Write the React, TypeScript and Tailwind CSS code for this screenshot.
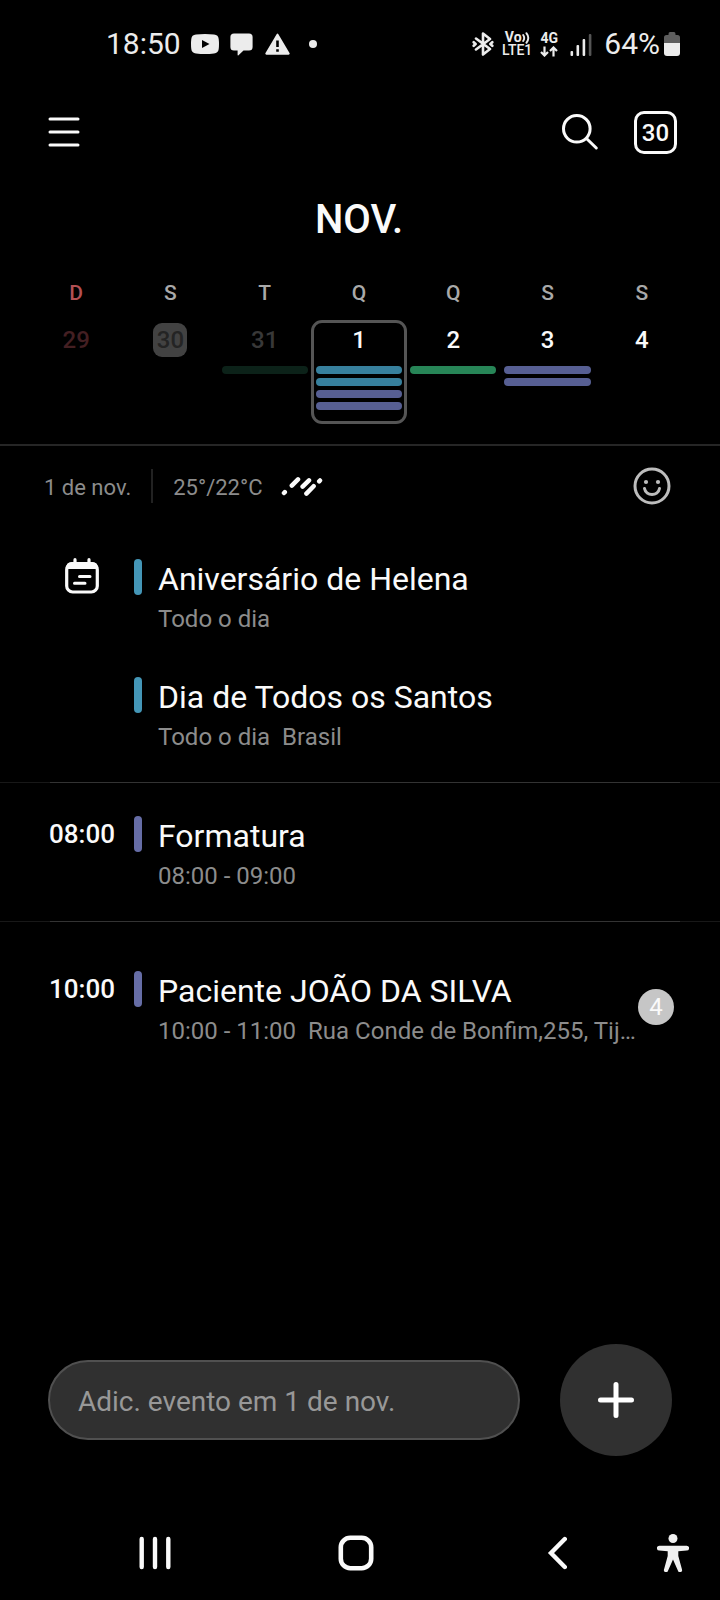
import { useState } from "react";

const TEAL = "bg-[#37809d]";
const INDIGO = "bg-[#575f93]";
const GREEN = "bg-[#278557]";

type Day = {
  weekday: string;
  label: string;
  tone: string;
  weekdayTone: string;
  bars: string[];
};

const week: Day[] = [
  { weekday: "D", label: "29", tone: "text-[#441f22]", weekdayTone: "text-[#b35053]", bars: [] },
  { weekday: "S", label: "30", tone: "text-[#242424] bg-[#424242]", weekdayTone: "text-[#a9a9a9]", bars: [] },
  { weekday: "T", label: "31", tone: "text-[#383838]", weekdayTone: "text-[#a9a9a9]", bars: ["bg-[#0c2219]"] },
  { weekday: "Q", label: "1", tone: "text-[#fafafa]", weekdayTone: "text-[#a9a9a9]", bars: [TEAL, TEAL, INDIGO, INDIGO] },
  { weekday: "Q", label: "2", tone: "text-[#fafafa]", weekdayTone: "text-[#a9a9a9]", bars: [GREEN] },
  { weekday: "S", label: "3", tone: "text-[#fafafa]", weekdayTone: "text-[#a9a9a9]", bars: [INDIGO, INDIGO] },
  { weekday: "S", label: "4", tone: "text-[#fafafa]", weekdayTone: "text-[#a9a9a9]", bars: [] },
];

function StatusBar() {
  return (
    <div className="flex h-[88px] items-center justify-between pr-10 pl-[106px] text-[30px] leading-9 text-[#ececec]">
      <div className="flex items-center">
        <span>18:50</span>
        <svg className="ml-[10px]" width="28" height="20" viewBox="0 0 28 20" aria-hidden="true">
          <path fill="currentColor" fillRule="evenodd" d="M5 .6Q14-.4 23 .6Q27.400 1 27.700 5Q28.300 10 27.700 15Q27.400 19 23 19.400Q14 20.400 5 19.400Q.6 19 .3 15Q-.3 10 .3 5Q.6 1 5 .6ZM11 6V14L18.500 10Z" />
        </svg>
        <svg className="ml-[11px]" width="23" height="23" viewBox="0 0 23 23" aria-hidden="true">
          <path fill="currentColor" d="M4 .5H19Q22.600.5 22.600 4V14Q22.600 17.500 19 17.500H13.500L8.500 22.300Q7.600 22.800 7.600 21.800V17.500H4Q.4 17.500.4 14V4Q.4.5 4 .5Z" />
        </svg>
        <svg className="ml-3" width="25" height="22" viewBox="0 0 25 22" aria-hidden="true">
          <path fill="currentColor" fillRule="evenodd" d="M11.600 1.200Q12.500-.2 13.400 1.200L24.500 20Q25.200 21.600 23.600 21.700H1.400Q-.2 21.600.5 20ZM11.200 7.500V14H13.800V7.500ZM11.200 16.200V18.800H13.800V16.200Z" />
        </svg>
        <span className="ml-[19px] size-2 rounded-full bg-[#ececec]" />
      </div>
      <div className="flex items-center">
        <svg width="22" height="24" viewBox="0 0 22 24" fill="none" stroke="currentColor" strokeWidth="2.600" strokeLinejoin="round" strokeLinecap="round" aria-hidden="true">
          <path d="M4 6.500L18 17L11 22.500V1.500L18 7L4 17.500" />
          <path d="M1.700 10.200L3.600 12L1.700 13.800M20.300 10.200L18.400 12L20.300 13.800" />
        </svg>
        <div className="ml-2 flex flex-col items-center text-[14px] leading-[13px] font-bold">
          <span className="flex items-center">
            Vo
            <svg width="8" height="12" viewBox="0 0 8 12" fill="none" stroke="currentColor" strokeWidth="1.900" strokeLinecap="round" aria-hidden="true">
              <path d="M1.200 3Q3.200 6 1.200 9M4.400 1.200Q8.200 6 4.400 10.800" />
            </svg>
          </span>
          <span className="font-medium">LTE1</span>
        </div>
        <div className="ml-2 flex flex-col items-center gap-px text-[14px] leading-[13px] font-bold">
          <span>4G</span>
          <svg width="18" height="11" viewBox="0 0 18 11" fill="none" stroke="currentColor" strokeWidth="2.200" aria-hidden="true">
            <path d="M4.500 .5V9.500M1 6L4.500 9.500L8 6M13.500 10.500V1.500M10 5L13.500 1.500L17 5" />
          </svg>
        </div>
        <svg className="ml-3" width="22" height="23" viewBox="0 0 22 23" aria-hidden="true">
          <g fill="currentColor">
            <rect x="0.500" y="18" width="2.600" height="5" rx="1" />
            <rect x="6.500" y="12" width="2.600" height="11" rx="1" />
            <rect x="12.600" y="6" width="2.600" height="17" rx="1" />
          </g>
          <rect x="18.800" y="1" width="2.600" height="22" rx="1" fill="#555" />
        </svg>
        <span className="ml-3">64%</span>
        <svg className="ml-1" width="16" height="24" viewBox="0 0 16 24" aria-hidden="true">
          <path fill="#5e5e5e" d="M4.500 2Q4.500 0 6 0H10Q11.500 0 11.500 2V3H13.500Q16 3 16 5.500V12H0V5.500Q0 3 2.500 3H4.500Z" />
          <path fill="currentColor" d="M0 11H16V21Q16 24 13 24H3Q0 24 0 21Z" />
        </svg>
      </div>
    </div>
  );
}

function TopBar() {
  return (
    <header className="flex h-[88px] items-center justify-between pr-[43px] pl-12">
      <button type="button" aria-label="Menu">
        <svg width="32" height="32" viewBox="0 0 32 32" stroke="#fafafa" strokeWidth="3" strokeLinecap="round">
          <path d="M2 3H30M2 16H30M2 29H30" />
        </svg>
      </button>
      <div className="flex items-center gap-[35px]">
        <button type="button" aria-label="Pesquisar">
          <svg width="38" height="38" viewBox="0 0 38 38" fill="none" stroke="#fafafa" strokeWidth="3" strokeLinecap="round">
            <circle cx="15.800" cy="15.800" r="13.300" />
            <path d="M25.500 25.500L35.300 35" />
          </svg>
        </button>
        <button type="button" aria-label="Hoje, 30" className="flex size-[43px] items-center justify-center rounded-[10px] border-[3px] border-[#fafafa] pt-0.5 text-2xl leading-7 font-medium">
          30
        </button>
      </div>
    </header>
  );
}

function WeekStrip() {
  const [selected, setSelected] = useState(3);
  return (
    <section className="border-b-2 border-[#262626] pt-5 pr-[31px] pb-5 pl-[29px]">
      <h1 className="text-center text-[40px] leading-12 font-medium">NOV.</h1>
      <div className="mt-[37px] grid grid-cols-7">
        {week.map((day, i) => (
          <div key={i} className="flex flex-col">
            <span className={"text-center text-[21px] leading-6 font-medium " + day.weekdayTone}>{day.weekday}</span>
            <button
              type="button"
              aria-pressed={i === selected}
              onClick={() => setSelected(i)}
              className={
                "-mx-px mt-[15px] flex h-[104px] flex-col items-center rounded-[11px] border-[3px] px-[2px] " +
                (i === selected ? "border-[#555]" : "border-transparent")
              }
            >
              <span className={"flex size-[34px] items-center justify-center rounded-[9px] text-2xl leading-7 font-medium " + day.tone}>
                {day.label}
              </span>
              <span className="mt-[9px] flex w-full flex-col gap-1">
                {day.bars.map((color, b) => (
                  <span key={b} className={"h-2 rounded-full " + color} />
                ))}
              </span>
            </button>
          </div>
        ))}
      </div>
    </section>
  );
}

function DayInfo() {
  return (
    <div className="flex items-center pt-[21px] pr-[49px] pl-11 text-[22px] leading-7 text-[#8c8c8c]">
      <span className="pt-1">1 de nov.</span>
      <span className="ml-5 h-[34px] w-[2px] bg-[#222]" />
      <span className="ml-5 pt-1">25°/22°C</span>
      <svg className="ml-[18px]" width="42" height="22" viewBox="0 0 42 22" stroke="#fafafa" strokeWidth="4.500" strokeLinecap="round" aria-label="Chuva" role="img">
        <path d="M3 18L3.800 17.200M10.800 10.600L17 4.400M21.600 11.600L28 5.400M25.400 18.600L32.600 11.200M38.200 6.300L39 5.500" />
      </svg>
      <button type="button" aria-label="Adicionar figurinha" className="ml-auto">
        <svg width="38" height="38" viewBox="0 0 38 38" fill="none" stroke="#bdbdbd" strokeWidth="3" strokeLinecap="round">
          <circle cx="19" cy="19" r="17" />
          <path d="M11.500 21.500C13 29.500 25 29.500 26.500 21.500" />
          <circle cx="13" cy="15" r="2.100" fill="#bdbdbd" stroke="none" />
          <circle cx="25" cy="15" r="2.100" fill="#bdbdbd" stroke="none" />
        </svg>
      </button>
    </div>
  );
}

function CalendarIcon() {
  return (
    <svg className="ml-4" width="34" height="38" viewBox="0 0 34 38" fill="none" stroke="#fafafa" strokeLinecap="round" aria-hidden="true">
      <rect x="1.700" y="5.700" width="30.600" height="28.300" rx="6" strokeWidth="3.200" />
      <path d="M1 11V10Q1 4 7 4H27Q33 4 33 10V11Z" fill="#fafafa" stroke="none" />
      <path d="M10 1.700V6M24 1.700V6" strokeWidth="3.200" />
      <path d="M14.500 18.500H25M9.500 25.200H20" strokeWidth="3" />
    </svg>
  );
}

type EventProps = {
  lead?: React.ReactNode;
  color: string;
  title: string;
  time: string;
  place?: string;
  count?: number;
};

function EventRow({ lead, color, title, time, place, count }: EventProps) {
  return (
    <article className="flex items-start pr-[46px] pl-[49px]">
      <div className="flex h-9 w-[85px] shrink-0 items-center text-[26px] leading-8 font-medium">{lead}</div>
      <span className={"h-9 w-2 shrink-0 rounded-full " + color} />
      <div className="ml-4 min-w-0 flex-1">
        <h2 className="truncate text-[32px] leading-10">{title}</h2>
        <p className="mt-1 flex gap-3 text-2xl leading-8 whitespace-nowrap text-[#8c8c8c]">
          <span>{time}</span>
          {place && <span className="truncate">{place}</span>}
        </p>
      </div>
      {count && (
        <span className="mt-[18px] flex size-9 shrink-0 items-center justify-center rounded-full bg-[#c6c6c6] text-2xl leading-7">
          {count}
        </span>
      )}
    </article>
  );
}

function Divider() {
  return (
    <div className="flex h-px bg-[#181818] pr-10 pl-[50px]">
      <span className="flex-1 bg-[#333]" />
    </div>
  );
}

function Composer() {
  return (
    <form className="flex items-center justify-between gap-10 pr-12 pl-12" onSubmit={(e) => e.preventDefault()}>
      <input
        type="text"
        aria-label="Adicionar evento em 1 de novembro"
        placeholder="Adic. evento em 1 de nov."
        className="h-20 min-w-0 flex-1 rounded-full border-2 border-[#505050] bg-[#303030] px-7 pt-0.5 text-[28px] outline-none placeholder:text-[#989898]"
      />
      <button type="submit" aria-label="Adicionar" className="flex size-28 shrink-0 items-center justify-center rounded-full bg-[#303030]">
        <svg width="36" height="36" viewBox="0 0 36 36" stroke="#fff" strokeWidth="5" strokeLinecap="round">
          <path d="M18 2.500V33.500M2.500 18H33.500" />
        </svg>
      </button>
    </form>
  );
}

function NavBar() {
  return (
    <nav className="mt-[50px] flex h-[94px] items-center pr-[31px] pl-[54px]">
      <button type="button" aria-label="Recentes" className="flex flex-1 justify-center">
        <svg width="34" height="34" viewBox="0 0 34 34" stroke="#fafafa" strokeWidth="4.400" strokeLinecap="round">
          <path d="M3.700 3V31M17 3V31M30.300 3V31" />
        </svg>
      </button>
      <button type="button" aria-label="Início" className="flex flex-1 justify-center">
        <svg width="36" height="36" viewBox="0 0 36 36" fill="none" stroke="#fafafa" strokeWidth="4.600">
          <rect x="2.800" y="2.800" width="30.400" height="30.400" rx="9.500" />
        </svg>
      </button>
      <button type="button" aria-label="Voltar" className="flex flex-1 justify-center">
        <svg width="20" height="34" viewBox="0 0 20 34" fill="none" stroke="#fafafa" strokeWidth="4.400" strokeLinecap="round" strokeLinejoin="miter">
          <path d="M17.800 3L4 17L17.800 31" />
        </svg>
      </button>
      <button type="button" aria-label="Acessibilidade">
        <svg width="32" height="38" viewBox="0 0 32 38" fill="#f0f0f0">
          <circle cx="16" cy="4.500" r="4.500" />
          <path d="M2.300 11.800H29.700A2.400 2.400 0 0 1 29.700 16.600L21.300 17.200V22L25 35.500A2.100 2.100 0 0 1 21.300 37.400L16 25.500L10.700 37.400A2.100 2.100 0 0 1 7 35.500L10.700 22V17.200L2.300 16.600A2.400 2.400 0 0 1 2.300 11.800Z" />
        </svg>
      </button>
    </nav>
  );
}

export default function App() {
  return (
    <div className="flex min-h-screen flex-col bg-black font-['Roboto',sans-serif] text-[#fafafa]">
      <StatusBar />
      <TopBar />
      <WeekStrip />
      <DayInfo />
      <main className="flex-1 pb-8">
        <div className="flex flex-col gap-[42px] pt-[54px] pb-[29px]">
          <EventRow lead={<CalendarIcon />} color="bg-[#4496b7]" title="Aniversário de Helena" time="Todo o dia" />
          <EventRow color="bg-[#4496b7]" title="Dia de Todos os Santos" time="Todo o dia" place="Brasil" />
        </div>
        <Divider />
        <div className="pt-[33px] pb-[29px]">
          <EventRow lead="08:00" color="bg-[#666da6]" title="Formatura" time="08:00 - 09:00" />
        </div>
        <Divider />
        <div className="pt-[49px]">
          <EventRow
            lead="10:00"
            color="bg-[#666da6]"
            title="Paciente JOÃO DA SILVA"
            time="10:00 - 11:00"
            place="Rua Conde de Bonfim,255, Tij…"
            count={4}
          />
        </div>
      </main>
      <Composer />
      <NavBar />
    </div>
  );
}
